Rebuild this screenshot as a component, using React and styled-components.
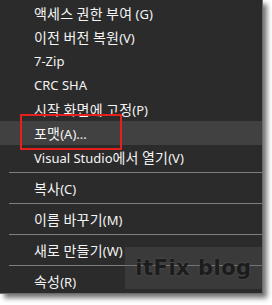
import React from "react";
import styled, { createGlobalStyle } from "styled-components";

const Global = createGlobalStyle`
  html, body { margin: 0; padding: 0; background: #ffffff; }
  body { width: 272px; height: 305px; overflow: hidden; }
`;

const Menu = styled.div`
  position: relative;
  box-sizing: border-box;
  width: 263px;
  display: flex;
  flex-direction: column;
  padding-top: 1px;
  background: #2b2b2b;
  border-right: 1px solid #6a6a6a;
  border-bottom: 1px solid #6a6a6a;
  box-shadow: 4px 4px 5px rgba(0, 0, 0, 0.55);
  font-family: "Noto Sans", "Noto Sans CJK KR", sans-serif;
  font-size: 13px;
  color: #f4f4f4;
`;

const Item = styled.div`
  height: 24px;
  line-height: 24px;
  padding-left: 34px;
  white-space: nowrap;
  background: ${(p) => (p.$hover ? "#414141" : "transparent")};
`;

const Ko = styled.span`
  font-family: "Noto Sans CJK KR", sans-serif;
  font-size: 14px;
  letter-spacing: 0.2px;
`;

const Separator = styled.div`
  height: 1px;
  margin: 3px 0 3px 9px;
  background: #7f7f7f;
`;

const Highlight = styled.div`
  position: absolute;
  left: 20px;
  top: 114px;
  width: 102px;
  height: 36px;
  box-sizing: border-box;
  border: 2px solid #e3201e;
`;

const Watermark = styled.div`
  position: absolute;
  left: 125px;
  top: 247px;
  right: 0;
  height: 42px;
  display: flex;
  align-items: center;
  justify-content: center;
  background: rgba(90, 90, 90, 0.32);
  font-family: "DejaVu Sans", sans-serif;
  font-weight: bold;
  font-size: 21px;
  letter-spacing: 0.5px;
  color: #1c1c1c;
  text-shadow: 0 0 3px rgba(255, 255, 255, 0.12);
`;

export default function App() {
  return (
    <>
      <Global />
      <Menu>
        <Item><Ko>액세스 권한 부여</Ko> (G)</Item>
        <Item><Ko>이전 버전 복원</Ko>(V)</Item>
        <Item>7-Zip</Item>
        <Item>CRC SHA</Item>
        <Item><Ko>시작 화면에 고정</Ko>(P)</Item>
        <Item $hover><Ko>포맷</Ko>(A)...</Item>
        <Item>Visual Studio<Ko>에서 열기</Ko>(V)</Item>
        <Separator />
        <Item><Ko>복사</Ko>(C)</Item>
        <Separator />
        <Item><Ko>이름 바꾸기</Ko>(M)</Item>
        <Separator />
        <Item><Ko>새로 만들기</Ko>(W)</Item>
        <Separator />
        <Item><Ko>속성</Ko>(R)</Item>
        <Highlight />
        <Watermark>itFix blog</Watermark>
      </Menu>
    </>
  );
}
